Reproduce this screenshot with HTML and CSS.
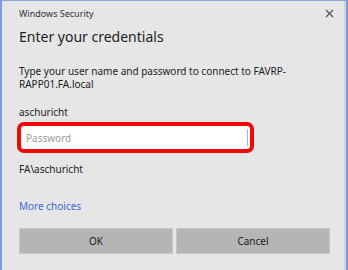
FILE: index.html
```html
<!DOCTYPE html>
<html>
<head>
    <title>Windows Security</title>
    <link rel="stylesheet" href="styles.css">
    <meta name="viewport" content="width=device-width, initial-scale=1.0">
</head>
<body>
    <div id="dialog">
        <div class="title-bar">
            <span class="title">Windows Security</span>
            <svg class="close" width="9" height="9" viewBox="0 0 9 9">
                <path d="M1 1 L8 8 M8 1 L1 8" stroke="#555" stroke-width="1.3" fill="none" />
            </svg>
        </div>
        <h1>Enter your credentials</h1>
        <p class="message">Type your user name and password to connect to FAVRP-RAPP01.FA.local</p>
        <p class="user">aschuricht</p>
        <div class="password-ring">
            <div class="password-box">
                <span class="placeholder">Password</span>
                <span class="caret"></span>
            </div>
        </div>
        <p class="domain">FA\aschuricht</p>
        <a class="more" href="#">More choices</a>
        <div class="buttons">
            <button class="btn">OK</button>
            <button class="btn">Cancel</button>
        </div>
    </div>
</body>
</html>
```

FILE: styles.css
```css
html, body {
    margin: 0;
    padding: 0;
}
body {
    font-family: "Noto Sans", "Open Sans", sans-serif;
    color: #222;
    background: #e6e6e6;
}
#dialog {
    box-sizing: border-box;
    width: 348px;
    height: 270px;
    background: #e6e6e6;
    border-top: 1px solid #8aa6dc;
    border-left: 2px solid #7c9ce0;
    border-right: 2px solid #7c9ce0;
    box-shadow: inset -2px 0 0 #d2d2d2;
    padding: 0 16px 0 17px;
}
.title-bar {
    display: flex;
    align-items: center;
    justify-content: space-between;
    height: 25px;
    margin-right: -4px;
}
.title {
    font-size: 9px;
    color: #333;
}
h1 {
    font-size: 14px;
    font-weight: normal;
    color: #222;
    margin: 1px 0 0 0;
    line-height: 20px;
}
.message {
    font-size: 10px;
    line-height: 13px;
    margin: 18px 0 0 0;
    width: 290px;
}
.user {
    font-size: 10px;
    line-height: 13px;
    margin: 15px 0 0 0;
}
.password-ring {
    box-sizing: border-box;
    width: 237px;
    height: 31px;
    margin: 3px 0 0 -2px;
    border: 4px solid #ee0a0a;
    border-radius: 7px;
    background: #fff;
    padding: 1px;
}
.password-box {
    display: flex;
    align-items: center;
    justify-content: space-between;
    height: 100%;
    padding-left: 4px;
}
.placeholder {
    font-size: 10px;
    color: #9a9a9a;
}
.caret {
    width: 1px;
    height: 17px;
    background: #9cb8e0;
    margin-right: 1px;
}
.domain {
    font-size: 10px;
    line-height: 13px;
    margin: 10px 0 0 0;
}
.more {
    display: block;
    font-size: 10px;
    line-height: 13px;
    color: #3b6dd4;
    text-decoration: none;
    margin-top: 24px;
}
.buttons {
    display: flex;
    gap: 3px;
    margin-top: 15px;
    width: 311px;
}
.btn {
    flex: 1;
    height: 26px;
    font-family: inherit;
    font-size: 10px;
    color: #222;
    background: #b5b5b5;
    border: 1px solid #c6c6c6;
    padding: 0;
}
```
